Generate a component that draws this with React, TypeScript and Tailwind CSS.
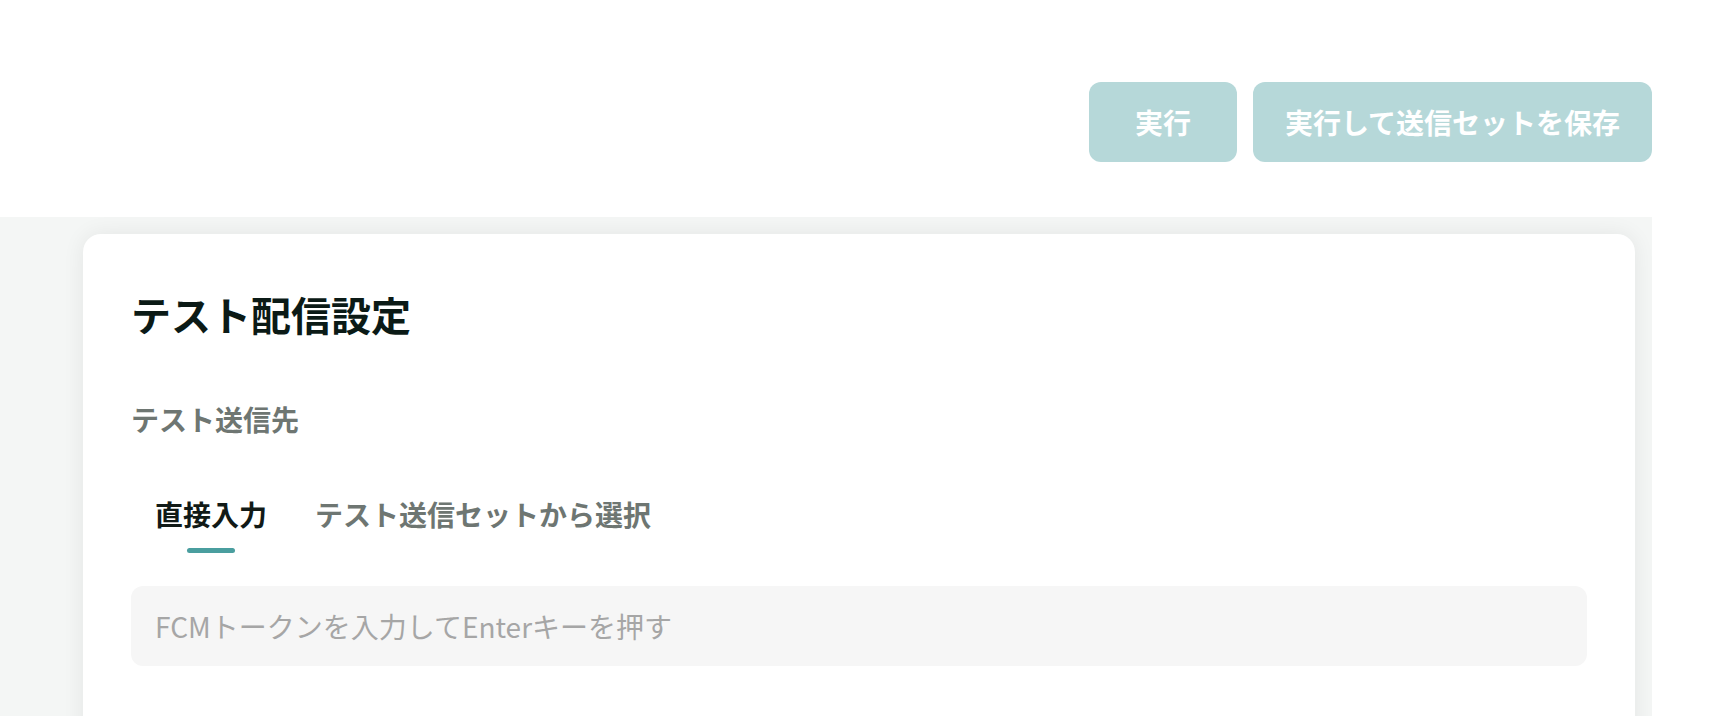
import React from "react";

export default function App() {
  const font = { fontFamily: '"Noto Sans CJK JP", "Noto Sans", sans-serif' };
  return (
    <div
      className="w-[1730px] h-[716px] overflow-hidden bg-white flex flex-col"
      style={font}
    >
      {/* Header with actions */}
      <div className="h-[217px] shrink-0 flex justify-end items-start pt-[82px] pr-[78px] gap-4">
        <button className="w-[148px] h-[80px] rounded-[12px] bg-[#b6d8d9] text-white text-[28px] font-bold flex items-center justify-center">
          実行
        </button>
        <button className="w-[399px] h-[80px] rounded-[12px] bg-[#b6d8d9] text-white text-[28px] font-bold flex items-center justify-center">
          実行して送信セットを保存
        </button>
      </div>

      {/* Content area */}
      <div className="flex-1 mr-[78px] bg-[#f4f6f5] pl-[83px] pr-[17px] pt-[17px]">
        <div className="bg-white rounded-[18px] shadow-[0_0_22px_rgba(0,0,0,0.07)] h-[600px] px-12 pt-12">
          <h1 className="text-[40px] leading-[64px] font-bold text-[#0b1a16]">
            テスト配信設定
          </h1>
          <div className="mt-[53px] text-[28px] leading-[40px] font-bold text-[#6e7672]">
            テスト送信先
          </div>
          <div className="mt-[55px] flex">
            <div className="px-6 flex flex-col items-center">
              <span className="text-[28px] leading-[40px] font-bold text-[#111a17]">
                直接入力
              </span>
              <span className="mt-[14px] w-[48px] h-[5px] rounded-full bg-[#4a9e9f]" />
            </div>
            <div className="px-6 flex flex-col items-center">
              <span className="text-[28px] leading-[40px] font-bold text-[#6e7672]">
                テスト送信セットから選択
              </span>
            </div>
          </div>
          <div className="mt-[33px] h-[80px] rounded-[12px] bg-[#f6f6f6] flex items-center px-[24px]">
            <input
              className="w-full bg-transparent outline-none text-[28px] text-[#333] placeholder:text-[#a6a6a6]"
              style={font}
              placeholder="FCMトークンを入力してEnterキーを押す"
            />
          </div>
        </div>
      </div>
    </div>
  );
}
